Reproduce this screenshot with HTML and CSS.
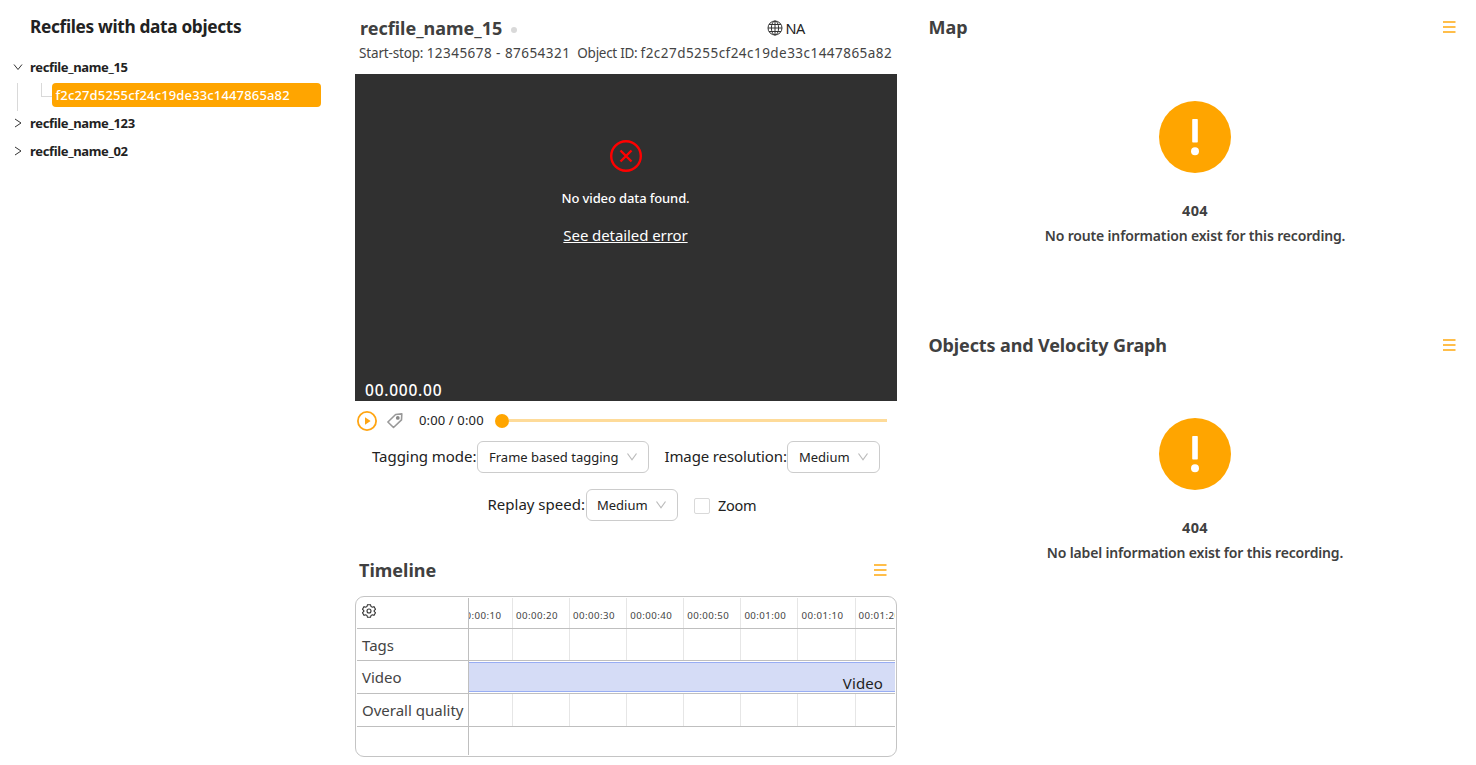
FILE: index.html
```html
<!DOCTYPE html>
<html lang="en">
<head>
<meta charset="utf-8">
<title>Recfiles</title>
<link rel="stylesheet" href="styles.css">
</head>
<body>
<svg class="defs" width="0" height="0">
  <symbol id="menu" viewBox="0 0 13 12"><path d="M0 1h12.500M0 6h12.500M0 11h12.500" stroke="#ffbe4a" stroke-width="1.800" fill="none"/></symbol>
  <symbol id="down" viewBox="0 0 12 12"><path d="M1.500 2.500 6 8.800l4.500-6.300" stroke="currentColor" fill="none" stroke-width="1.200"/></symbol>
  <symbol id="warn" viewBox="0 0 72 72"><circle cx="36" cy="36" r="36" fill="#ffa500"/><rect x="33.200" y="18" width="5.600" height="23.500" rx=".8" fill="#fff"/><circle cx="36" cy="50.200" r="4" fill="#fff"/></symbol>
</svg>
<div class="page">
  <aside class="tree-card">
    <h2 class="tree-title"><span>Recfiles with data objects</span></h2>
    <div class="tree">
      <div class="node"><svg class="caret" viewBox="0 0 10 10"><path d="M1 2.500 5 7.500 9 2.500"/></svg><span>recfile_name_15</span></div>
      <div class="node child"><i class="rail"></i><i class="elbow"></i><div class="leaf"><span>f2c27d5255cf24c19de33c1447865a82</span></div></div>
      <div class="node"><svg class="caret" viewBox="0 0 10 10"><path d="M2 1 8 5 2 9"/></svg><span>recfile_name_123</span></div>
      <div class="node"><svg class="caret" viewBox="0 0 10 10"><path d="M2 1 8 5 2 9"/></svg><span>recfile_name_02</span></div>
    </div>
  </aside>

  <main class="center">
    <section class="player">
      <div class="player-head">
        <h2 class="title file"><span>recfile_name_15</span></h2><i class="status"></i>
        <div class="region">
          <svg class="globe" viewBox="0 0 16 16"><g fill="none" stroke="#333" stroke-width="1"><circle cx="8" cy="8" r="7"/><ellipse cx="8" cy="8" rx="3.600" ry="7"/><path d="M8 1v14M1 8h14M2 4.500h12M2 11.500h12"/></g></svg>
          <span>NA</span>
        </div>
      </div>
      <div class="meta"><span class="range">Start-stop: <span class="num">12345678 - 87654321</span></span><span class="oid">Object ID: <span class="num">f2c27d5255cf24c19de33c1447865a82</span></span></div>
      <div class="video">
        <svg class="fail" viewBox="0 0 32 32"><circle cx="16" cy="16" r="14.800"/><path d="m10.500 10.500 11 11m0-11-11 11"/></svg>
        <div class="nodata"><span>No video data found.</span></div>
        <div class="detail"><span>See detailed error</span></div>
        <div class="clock"><span>00.000.00</span></div>
      </div>
      <div class="controls">
        <svg class="play" viewBox="0 0 20 20"><circle cx="10" cy="10" r="9.100" fill="none" stroke="#ffa512" stroke-width="1.800"/><path d="M8 6.200v7.600l5.600-3.800z" fill="#ffa512"/></svg>
        <svg class="tag" viewBox="0 0 16 16"><path d="M.9 9 8.600 1.500l6.200-.6-.3 6-8 7.600z" fill="none" stroke="#999" stroke-width="1.600" stroke-linejoin="round"/><circle cx="10.800" cy="4.900" r="1.900" fill="#888"/></svg>
        <span class="time">0:00 / 0:00</span>
        <div class="slider"><i class="knob"></i><i class="track"></i></div>
      </div>
      <div class="options">
        <span class="lab l1">Tagging mode:</span><div class="select s1"><span>Frame based tagging</span><svg><use href="#down"/></svg></div>
        <span class="lab l2">Image resolution:</span><div class="select s2"><span>Medium</span><svg><use href="#down"/></svg></div>
      </div>
      <div class="options second">
        <span class="lab l3">Replay speed:</span><div class="select s3"><span>Medium</span><svg><use href="#down"/></svg></div>
        <i class="check"></i><span class="zoom">Zoom</span>
      </div>
    </section>

    <section class="timeline">
      <div class="bar-head"><h2 class="title tl"><span>Timeline</span></h2><svg class="menu"><use href="#menu"/></svg></div>
      <div class="chart">
        <div class="labels">
          <div><svg class="gear" viewBox="0 0 14 14"><path d="M5.500.7h3l.5 1.800 1.200.7 1.800-.5 1.500 2.600-1.300 1.300v.8l1.300 1.300-1.500 2.600-1.800-.5-1.200.7-.5 1.800h-3L5 11.500l-1.200-.7-1.800.5L.5 8.700l1.300-1.300v-.8L.5 5.300 2 2.700l1.800.5L5 2.500z"/><circle cx="7" cy="7" r="2"/></svg></div>
          <div><span>Tags</span></div><div><span>Video</span></div><div><span>Overall quality</span></div><div></div>
        </div>
        <div class="grid">
          <div class="row ticks"><b class="first"><span>00:00:10</span></b><b><span>00:00:20</span></b><b><span>00:00:30</span></b><b><span>00:00:40</span></b><b><span>00:00:50</span></b><b><span>00:01:00</span></b><b><span>00:01:10</span></b><b><span>00:01:20</span></b></div>
          <div class="row"><b class="first"></b><b></b><b></b><b></b><b></b><b></b><b></b><b></b></div>
          <div class="row lane"><div class="clip"><span>Video</span></div></div>
          <div class="row"><b class="first"></b><b></b><b></b><b></b><b></b><b></b><b></b><b></b></div>
          <div></div>
        </div>
      </div>
    </section>
  </main>

  <div class="side">
    <section class="panel">
      <div class="bar-head"><h2 class="title mp"><span>Map</span></h2><svg class="menu"><use href="#menu"/></svg></div>
      <svg class="warn"><use href="#warn"/></svg>
      <p class="code"><span>404</span></p><p class="msg"><span>No route information exist for this recording.</span></p>
    </section>
    <section class="panel">
      <div class="bar-head"><h2 class="title ov"><span>Objects and Velocity Graph</span></h2><svg class="menu"><use href="#menu"/></svg></div>
      <svg class="warn"><use href="#warn"/></svg>
      <p class="code"><span>404</span></p><p class="msg"><span>No label information exist for this recording.</span></p>
    </section>
  </div>
</div>
</body>
</html>
```
FILE: styles.css
```css
* { box-sizing: border-box; margin: 0; padding: 0; }
body { background: #fff; color: #222; font-family: "Noto Sans", sans-serif; overflow: hidden; height: 765px; }
i { display: block; flex: none; }
svg { display: block; flex: none; }
span { white-space: nowrap; flex: none; }
.defs { position: absolute; }
.page { display: grid; grid-template-columns: 347px 559px 1fr; height: 765px; }

/* file tree */
.tree-title { height: 53px; line-height: 54px; padding-left: 30px; font-size: 17.300px; font-weight: 700; letter-spacing: -.34px; }
.node { display: flex; align-items: center; height: 28px; font-size: 13px; font-weight: 700; line-height: 28px; letter-spacing: -.34px; }
.caret { width: 10px; height: 10px; margin: 0 7px 0 13px; fill: none; stroke: #333; stroke-width: 1; }
.child { align-items: flex-start; letter-spacing: .15px; }
.rail { width: 1px; height: 28px; margin: 2px 0 0 17px; background: #d9d9d9; }
.elbow { width: 11px; height: 14px; margin: 2px 0 0 23px; border-left: 1px solid #d9d9d9; border-bottom: 1px solid #d9d9d9; }
.leaf { width: 269px; height: 24px; margin-top: 2px; padding-left: 3.500px; border-radius: 4px; background: #ffa500; color: #fff; line-height: 24px; font-weight: 500; }

/* player */
.player { height: 545px; padding: 0 9px 0 8px; }
.title { font-size: 18px; font-weight: 700; color: #404040; }
.player-head { display: flex; align-items: center; height: 40px; padding: 16px 92px 0 5px; line-height: 24px; }
.status { width: 6px; height: 6px; margin: 3px 0 0 9px; border-radius: 50%; background: #d9d9d9; }
.region { display: flex; align-items: center; gap: 3px; margin-left: auto; font-size: 14.500px; letter-spacing: -.4px; }
.globe { width: 16px; height: 16px; }
.meta { display: flex; gap: 7px; height: 34px; padding: 2px 0 0 4px; line-height: 22px; font-size: 13.500px; color: #444; }
.range { letter-spacing: -.16px; }
.oid { letter-spacing: -.29px; }
.num { letter-spacing: .46px; }
.video { display: flex; flex-direction: column; align-items: center; height: 327px; padding-top: 66px; background: #303030; color: #fff; }
.fail { width: 32px; height: 32px; fill: none; stroke: #f00; stroke-width: 2.400; }
.nodata { height: 26px; margin: 13px 1px 0 0; line-height: 26px; font-size: 13px; font-weight: 500; letter-spacing: -.12px; }
.detail { height: 24px; margin: 12px 1px 0 0; line-height: 24px; font-size: 15px; text-decoration: underline; letter-spacing: -.08px; }
.clock { align-self: flex-start; margin: auto 0 -1px 10px; line-height: 24px; font-size: 15.500px; font-weight: 500; letter-spacing: .76px; }
.controls { display: flex; align-items: center; height: 40px; padding: 0 10px 0 2px; }
.play { width: 20px; height: 20px; }
.tag { width: 16px; height: 16px; margin-left: 10px; }
.time { width: 76px; margin: 0 0 2px 16px; font-size: 13px; letter-spacing: .14px; }
.slider { display: flex; align-items: center; flex: 1; margin-bottom: 1px; }
.knob { width: 14px; height: 14px; border-radius: 50%; background: #ffa500; }
.track { flex: 1; height: 3px; background: #fedb99; }
.options { display: flex; align-items: center; height: 32px; padding-left: 17px; }
.second { margin-top: 16px; padding-left: 132.500px; }
.lab { margin-bottom: 2px; font-size: 15px; line-height: 32px; }
.l1 { width: 105px; letter-spacing: -.05px; }
.l2 { width: 122.500px; margin-left: 15.500px; letter-spacing: -.13px; }
.l3 { width: 98.500px; }
.select { display: flex; align-items: center; justify-content: space-between; height: 32px; padding: 0 10px 0 11px; border: 1px solid #ccc; border-radius: 6px; font-size: 13px; }
.select svg { width: 12px; height: 12px; color: #bbb; }
.s1 { width: 172px; }
.s2 { width: 93px; }
.s3 { width: 92px; padding-left: 10px; }
.check { width: 16px; height: 16px; margin: 2px 8px 0 16px; border: 1px solid #d9d9d9; border-radius: 2px; }
.zoom { font-size: 14.500px; letter-spacing: -.3px; }

/* timeline */
.timeline { padding: 0 9px 0 8px; }
.bar-head { display: flex; align-items: center; justify-content: space-between; }
.menu { width: 13px; height: 12px; }
.timeline .bar-head { height: 50px; margin-bottom: 1px; padding: 0 10px 0 4px; }
.chart { display: grid; grid-template-columns: 112px 426px; width: 542px; height: 161px; padding: 1px; border: 1px solid #c4c4c4; border-radius: 9px; }
.labels, .grid { display: grid; grid-template-rows: 31px 32px 33px 33px 28px; min-width: 0; }
.labels { border-right: 1px solid #bfbfbf; color: #444; font-size: 15px; }
.labels div { display: flex; align-items: center; padding-left: 5px; border-bottom: 1px solid #bfbfbf; }
.labels div:last-child { border: 0; }
.gear { width: 14px; height: 14px; margin-top: -5px; fill: none; stroke: #333; stroke-width: 1.100; }
.row { display: flex; overflow: hidden; border-bottom: 1px solid #bfbfbf; }
.row b { flex: none; width: 57.100px; border-left: 1px solid #e6e6e6; font-weight: 400; }
.row .first { display: flex; justify-content: flex-end; width: 43px; border: 0; overflow: hidden; padding-right: 10.500px; }
.ticks b { padding: 8px 0 0 3px; font-size: 9.700px; line-height: 20px; color: #444; letter-spacing: .44px; }
.lane { padding: 1px 0; }
.clip { flex: 1; padding: 6px 12px 0 0; border: solid #98adf3; border-width: 1px 0; background: #d5dcf6; text-align: right; font-size: 15px; line-height: 28px; letter-spacing: .1px; }

/* side panels */
.panel { height: 318px; padding: 0 4px 0 12px; text-align: center; color: #404040; }
.panel .bar-head { height: 54px; padding: 0 16px 0 10.500px; }
.ov { letter-spacing: -.13px; }
.warn { width: 72px; height: 72px; margin: 47px auto 0; }
.panel + .panel .warn { margin-top: 46px; }
.code { height: 25px; margin-top: 25px; line-height: 25px; font-size: 14.500px; font-weight: 700; letter-spacing: .3px; }
.msg { line-height: 25px; font-size: 14px; font-weight: 600; letter-spacing: -.16px; }
```
